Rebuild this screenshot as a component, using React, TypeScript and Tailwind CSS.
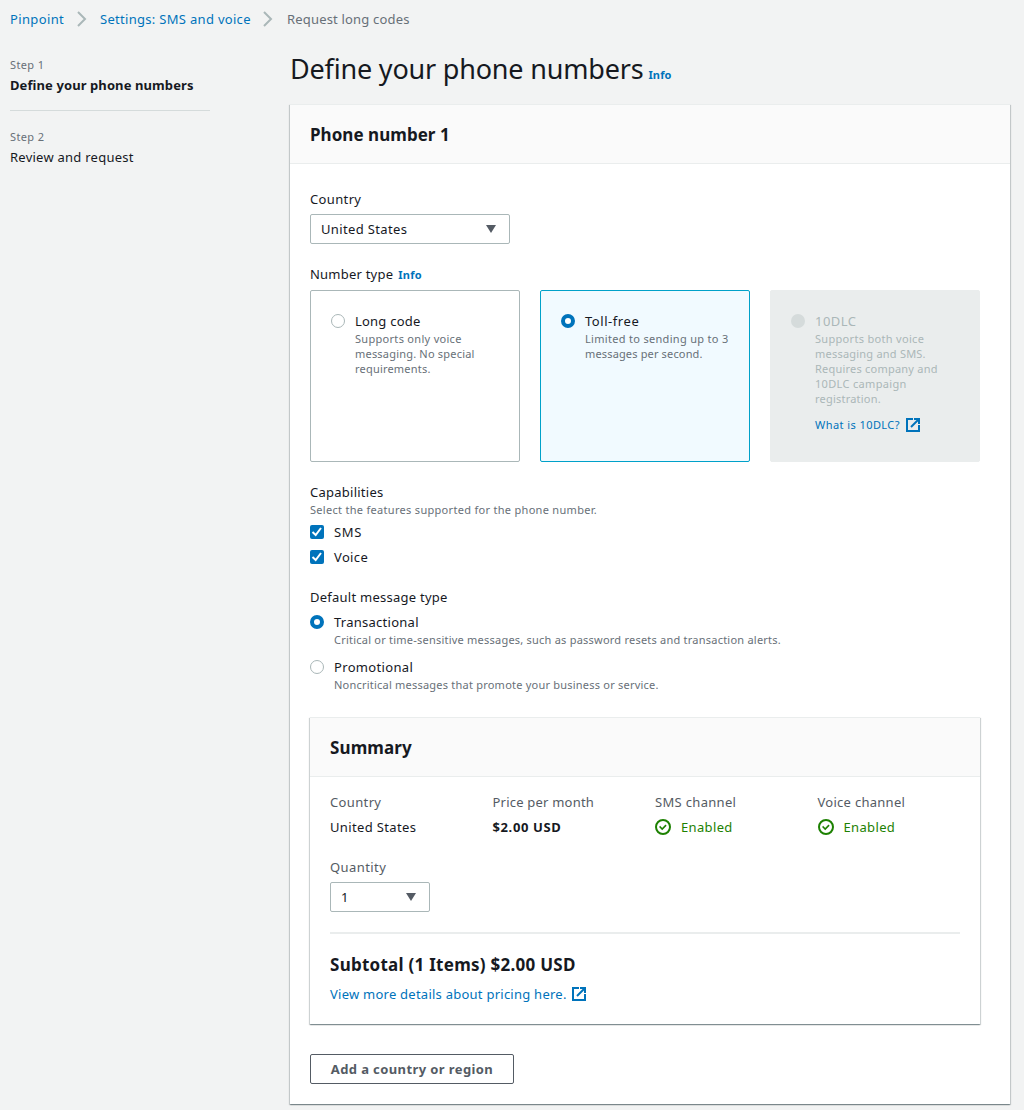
import type { ReactNode } from 'react';

const cardShadow =
  'shadow-[0_1px_1px_0_rgba(0,28,36,0.3),1px_1px_1px_0_rgba(0,28,36,0.15),-1px_1px_1px_0_rgba(0,28,36,0.15)]';

function Chevron() {
  return (
    <svg className="h-4 w-4 shrink-0" viewBox="0 0 16 16" fill="none" stroke="#aab7b8" strokeWidth="2">
      <path d="M4 1l7 7-7 7" />
    </svg>
  );
}

function ExternalIcon() {
  return (
    <svg className="h-4 w-4 shrink-0" viewBox="0 0 16 16" fill="none" stroke="#0073bb" strokeWidth="2">
      <path strokeLinecap="square" d="M10 2h4v4" />
      <path d="M6 10l8-8" />
      <path strokeLinecap="square" d="M14 9.048V14H2V2h5" />
    </svg>
  );
}

function StatusIcon() {
  return (
    <svg className="h-4 w-4 shrink-0" viewBox="0 0 16 16" fill="none" stroke="#1d8102">
      <circle cx="8" cy="8" r="7" strokeWidth="2" />
      <path strokeLinecap="square" strokeWidth="1.6" d="M5.2 8l2 2 3.3-3.3" />
    </svg>
  );
}

function Radio({ state }: { state: 'off' | 'on' | 'disabled' }) {
  if (state === 'on')
    return <span className="mt-[3px] h-3.5 w-3.5 shrink-0 rounded-full border-4 border-[#0073bb] bg-white" />;
  if (state === 'disabled') return <span className="mt-[3px] h-3.5 w-3.5 shrink-0 rounded-full bg-[#d5dbdb]" />;
  return <span className="mt-[3px] h-3.5 w-3.5 shrink-0 rounded-full border border-[#aab7b8] bg-white" />;
}

function Checkbox({ label, track }: { label: string; track: string }) {
  return (
    <div className="flex gap-2.5">
      <svg className="mt-[3px] h-3.5 w-3.5 shrink-0" viewBox="0 0 14 14" fill="none">
        <rect width="14" height="14" rx="2" fill="#0073bb" />
        <path d="M2.5 7l3.2 3 5.3-7" stroke="#fff" strokeWidth="2" />
      </svg>
      <span className={track}>{label}</span>
    </div>
  );
}

function Select({ value, width }: { value: string; width: string }) {
  return (
    <div
      className={`mt-[5px] flex h-[30px] items-center justify-between rounded-[2px] border border-[#aab7b8] bg-white pr-[13px] pl-2.5 ${width}`}
    >
      <span className="tracking-[0.36px]">{value}</span>
      <svg className="h-2 w-2.5" viewBox="0 0 10 8">
        <path d="M0 0h10L5 8z" fill="#545b64" />
      </svg>
    </div>
  );
}

function CardHeader({ children }: { children: ReactNode }) {
  return (
    <div className="flex h-[59px] items-center border-b border-[#eaeded] bg-[#fafafa] px-5 pt-0.5 text-[17px] leading-5 font-bold">
      {children}
    </div>
  );
}

const small = 'text-[11px] leading-[15px]';

export default function App() {
  return (
    <div className="min-h-[1110px] w-[1024px] bg-[#f2f3f3] pt-[9px] font-['Noto_Sans',sans-serif] text-[13px] leading-5 whitespace-nowrap text-[#16191f]">
      <nav className="flex h-5 items-center px-2.5 text-[#0073bb]">
        <a className="w-16 tracking-[0.36px]">Pinpoint</a>
        <Chevron />
        <a className="ml-2.5 w-[160px] tracking-[0.3px]">Settings: SMS and voice</a>
        <Chevron />
        <span className="ml-[11px] tracking-[0.18px] text-[#687078]">Request long codes</span>
      </nav>

      <div className="flex pl-2.5">
        <aside className="w-[200px] shrink-0 pt-[26px]">
          <div className="border-b border-[#d5dbdb] pb-[15px]">
            <div className="text-[11px] tracking-[0.37px] text-[#687078]">Step 1</div>
            <div className="font-bold tracking-[0.09px]">Define your phone numbers</div>
          </div>
          <div className="pt-4">
            <div className="text-[11px] tracking-[0.37px] text-[#687078]">Step 2</div>
            <div className="tracking-[0.25px]">Review and request</div>
          </div>
        </aside>

        <main className="ml-20 w-[720px]">
          <div className="flex h-[75px] items-baseline pt-[22px]">
            <h1 className="text-[27px] leading-9 tracking-[-0.19px]">Define your phone numbers</h1>
            <a className="ml-[5px] text-[11px] font-bold tracking-[0.15px] text-[#0073bb]">Info</a>
          </div>

          <section className={`h-[1000px] border-t border-[#eaeded] bg-white ${cardShadow}`}>
            <CardHeader>
              <h2 className="tracking-[0.04px]">Phone number 1</h2>
            </CardHeader>

            <div className="px-5 pt-[25px]">
              <div className="tracking-[0.36px]">Country</div>
              <Select value="United States" width="w-[200px]" />

              <div className="mt-5 flex h-5 items-baseline tracking-[0.22px]">
                Number type
                <a className="ml-[5px] text-[11px] leading-5 font-bold tracking-[0.25px] text-[#0073bb]">Info</a>
              </div>

              <div className="mt-1.5 grid w-[670px] grid-cols-3 gap-5">
                <div className="flex h-[172px] gap-2.5 rounded-[2px] border border-[#aab7b8] px-5 pt-5">
                  <Radio state="off" />
                  <div>
                    <div className="tracking-[0.22px]">Long code</div>
                    <div className={`${small} text-[#687078]`}>
                      <span className="tracking-[0.3px]">Supports only voice</span>
                      <br />
                      <span className="tracking-[0.2px]">messaging. No special</span>
                      <br />
                      <span className="tracking-[0.2px]">requirements.</span>
                    </div>
                  </div>
                </div>
                <div className="flex h-[172px] gap-2.5 rounded-[2px] border border-[#00a1c9] bg-[#f1faff] px-5 pt-5">
                  <Radio state="on" />
                  <div>
                    <div className="tracking-[0.55px]">Toll-free</div>
                    <div className={`${small} text-[#687078]`}>
                      <span className="tracking-[0.31px]">Limited to sending up to 3</span>
                      <br />
                      <span className="tracking-[0.15px]">messages per second.</span>
                    </div>
                  </div>
                </div>
                <div className="flex h-[172px] gap-2.5 rounded-[2px] border border-[#eaeded] bg-[#eaeded] px-5 pt-5">
                  <Radio state="disabled" />
                  <div className="text-[#aab7b8]">
                    <div className="tracking-[0.47px]">10DLC</div>
                    <div className={`${small} tracking-[0.22px]`}>
                      <span className="tracking-[0.31px]">Supports both voice</span>
                      <br />
                      messaging and SMS.
                      <br />
                      Requires company and
                      <br />
                      <span className="tracking-[0.33px]">10DLC campaign</span>
                      <br />
                      registration.
                    </div>
                    <a className="mt-[9px] flex items-center gap-[5px] text-[11px] leading-5 tracking-[0.43px] text-[#0073bb]">
                      What is 10DLC?
                      <ExternalIcon />
                    </a>
                  </div>
                </div>
              </div>

              <div className="mt-5 tracking-[0.25px]">Capabilities</div>
              <div className={`${small} tracking-[0.3px] text-[#687078]`}>
                Select the features supported for the phone number.
              </div>
              <div className="mt-[5px] flex flex-col gap-[5px]">
                <Checkbox label="SMS" track="tracking-[0.7px]" />
                <Checkbox label="Voice" track="tracking-[0.36px]" />
              </div>

              <div className="mt-5 tracking-[0.25px]">Default message type</div>
              <div className="mt-[5px] flex gap-2.5">
                <Radio state="on" />
                <div>
                  <div className="tracking-[0.26px]">Transactional</div>
                  <div className={`${small} tracking-[0.225px] text-[#687078]`}>
                    Critical or time-sensitive messages, such as password resets and transaction alerts.
                  </div>
                </div>
              </div>
              <div className="mt-2.5 flex gap-2.5">
                <Radio state="off" />
                <div>
                  <div className="tracking-[0.33px]">Promotional</div>
                  <div className={`${small} tracking-[0.22px] text-[#687078]`}>
                    Noncritical messages that promote your business or service.
                  </div>
                </div>
              </div>

              <section className={`mt-[25px] h-[307px] w-[670px] border-t border-[#eaeded] bg-white ${cardShadow}`}>
                <CardHeader>
                  <h3 className="tracking-[0.12px]">Summary</h3>
                </CardHeader>
                <div className="px-5 pt-[15px]">
                  <div className="-mr-5 grid w-[650px] grid-cols-4 gap-y-[5px] text-[#545b64]">
                    <span className="tracking-[0.36px]">Country</span>
                    <span className="tracking-[0.21px]">Price per month</span>
                    <span className="tracking-[0.32px]">SMS channel</span>
                    <span className="tracking-[0.28px]">Voice channel</span>
                    <span className="tracking-[0.36px] text-[#16191f]">United States</span>
                    <span className="font-bold tracking-[0.62px] text-[#16191f]">$2.00 USD</span>
                    <span className="flex items-center gap-2.5 tracking-[0.35px] text-[#1d8102]">
                      <StatusIcon />
                      Enabled
                    </span>
                    <span className="flex items-center gap-2.5 tracking-[0.35px] text-[#1d8102]">
                      <StatusIcon />
                      Enabled
                    </span>
                  </div>

                  <div className="mt-5 tracking-[0.42px] text-[#545b64]">Quantity</div>
                  <Select value="1" width="w-[100px]" />

                  <div className="mt-5 h-0.5 bg-[#eaeded]" />
                  <div className="mt-[21px] text-[17px] leading-5 font-bold tracking-[0.26px]">
                    Subtotal (1 Items) $2.00 USD
                  </div>
                  <a className="mt-[9px] flex items-center gap-1 tracking-[0.245px] text-[#0073bb]">
                    View more details about pricing here.
                    <ExternalIcon />
                  </a>
                </div>
              </section>

              <button className="mt-[30px] h-[30px] w-[204px] rounded-[2px] border border-[#545b64] bg-white font-bold tracking-[0.4px] text-[#545b64]">
                Add a country or region
              </button>
            </div>
          </section>
        </main>
      </div>
    </div>
  );
}
